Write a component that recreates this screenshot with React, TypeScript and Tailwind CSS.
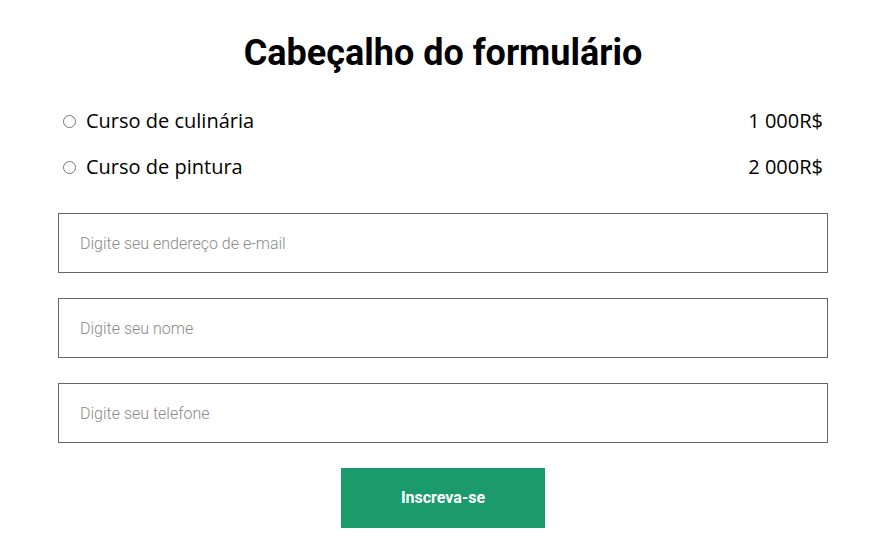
import React from "react";

const courses = [
  { name: "Curso de culinária", price: "1 000R$" },
  { name: "Curso de pintura", price: "2 000R$" },
];

const fields = [
  "Digite seu endereço de e-mail",
  "Digite seu nome",
  "Digite seu telefone",
];

export default function App() {
  return (
    <div className="min-h-[556px] bg-white">
      <form className="ml-[58px] flex w-[770px] flex-col pt-[30px]">
        <h1 className="text-center font-['Roboto',sans-serif] text-[36px] font-bold leading-[46px] text-black">
          Cabeçalho do formulário
        </h1>

        {/* Course options */}
        <div className="mt-[32px] flex flex-col gap-[20px] px-[5px]">
          {courses.map((c) => (
            <label
              key={c.name}
              className="flex items-center justify-between font-['Open_Sans',sans-serif] text-[20px] leading-[26px] text-black"
            >
              <span className="flex items-center">
                <input type="radio" name="course" className="m-0 h-[13px] w-[13px] accent-gray-500" />
                <span className="ml-[10px]">{c.name}</span>
              </span>
              <span>{c.price}</span>
            </label>
          ))}
        </div>

        {/* Inputs */}
        <div className="mt-[33px] flex flex-col gap-[25px]">
          {fields.map((f) => (
            <input
              key={f}
              placeholder={f}
              className="h-[60px] w-full border border-[#666] px-[21px] font-['Roboto',sans-serif] text-[16px] font-light text-black outline-none placeholder:text-[#8a8a8a]"
            />
          ))}
        </div>

        <button
          type="button"
          className="mx-auto mt-[25px] h-[60px] w-[204px] bg-[#1b9b6b] font-['Roboto',sans-serif] text-[16px] font-bold text-white"
        >
          Inscreva-se
        </button>
      </form>
    </div>
  );
}
